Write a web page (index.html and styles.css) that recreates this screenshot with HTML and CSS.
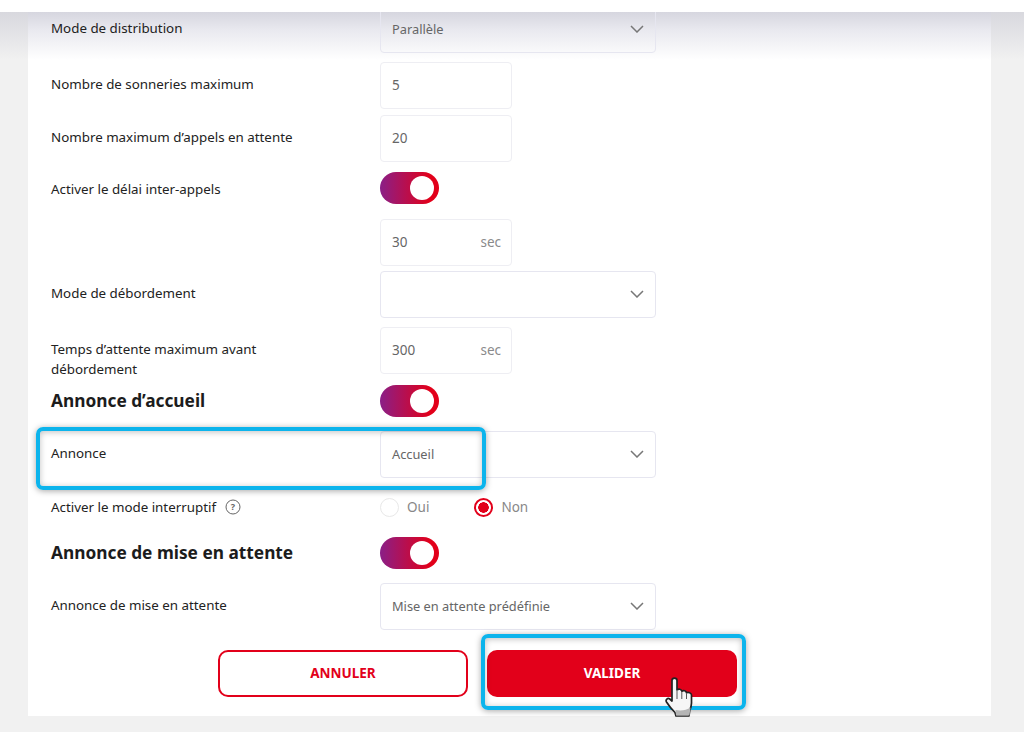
FILE: index.html
```html
<!DOCTYPE html>
<html lang="fr">
<head>
<meta charset="utf-8">
<title>Configuration</title>
<link rel="stylesheet" href="styles.css">
</head>
<body>
<main class="card">
  <div class="row r-first"><label class="label">Mode de distribution</label>
    <div class="field select disabled"><span>Parallèle</span><svg class="chev" viewBox="0 0 14 8"><path d="M1 1l6 6 6-6"/></svg></div></div>
  <div class="row r-9"><label class="label">Nombre de sonneries maximum</label>
    <div class="field short"><span>5</span></div></div>
  <div class="row r-6"><label class="label">Nombre maximum d’appels en attente</label>
    <div class="field short"><span>20</span></div></div>
  <div class="row r-10 center"><label class="label low">Activer le délai inter-appels</label>
    <div class="toggle"><i></i></div></div>
  <div class="row r-15"><span class="label"></span>
    <div class="field short"><span>30</span><em>sec</em></div></div>
  <div class="row r-5"><label class="label">Mode de débordement</label>
    <div class="field select"><span></span><svg class="chev" viewBox="0 0 14 8"><path d="M1 1l6 6 6-6"/></svg></div></div>
  <div class="row r-9"><label class="label two">Temps d’attente maximum avant débordement</label>
    <div class="field short"><span>300</span><em>sec</em></div></div>
  <div class="row r-11 center"><h2 class="heading">Annonce d’accueil</h2>
    <div class="toggle"><i></i></div></div>
  <div class="row r-14"><label class="label">Annonce</label>
    <div class="field select"><span>Accueil</span><svg class="chev" viewBox="0 0 14 8"><path d="M1 1l6 6 6-6"/></svg></div></div>
  <div class="row r-19 center"><label class="label">Activer le mode interruptif <svg class="help" viewBox="0 0 16 16"><circle cx="8" cy="8" r="7"/><text x="8" y="11.2">?</text></svg></label>
    <div class="radios">
      <span class="radio"><i class="dot"></i>Oui</span>
      <span class="radio"><i class="dot on"></i>Non</span>
    </div></div>
  <div class="row r-20 center"><h2 class="heading">Annonce de mise en attente</h2>
    <div class="toggle"><i></i></div></div>
  <div class="row r-14"><label class="label">Annonce de mise en attente</label>
    <div class="field select"><span>Mise en attente prédéfinie</span><svg class="chev" viewBox="0 0 14 8"><path d="M1 1l6 6 6-6"/></svg></div></div>
  <div class="actions">
    <button class="btn ghost">ANNULER</button>
    <button class="btn solid">VALIDER</button>
  </div>
</main>
<div class="topstrip"></div>
<div class="hl hl-a"></div>
<div class="hl hl-b"></div>
<svg class="hand" viewBox="0 0 30 42">
  <path d="M7 3.500c0-3.200 5-3.200 5 0V13c1.500-1.500 4.500-1 4.800 1.200 1.500-1 4.500-.6 4.700 1.600 1.800-.8 4.800 0 5 2.200v8c0 3-.8 5-1.800 7.500l-.7 5.500H11l-1-3.500C7.500 33 4 29 1.500 25c-1.300-2.300 1.200-4.500 3.300-3l2.200 2z" fill="#f6f6f6" stroke="#222" stroke-width="1.700" stroke-linejoin="round"/>
  <path d="M12 14v8M16.800 15v7M21.500 16.500V22" fill="none" stroke="#555" stroke-width="1"/>
  <path d="M11 38.500h13.500l1-8c-4 3-10 3.500-15 2.500z" fill="#b5b5b5"/>
</svg>
</body>
</html>
```
FILE: styles.css
```css
* { box-sizing: border-box; }
html, body { margin: 0; height: 732px; overflow: hidden; }
body { background: linear-gradient(#d8d8de 12px, #f1f1f1 60px); font-family: "Noto Sans", "Open Sans", sans-serif; color: #222; position: relative; }
.card { width: 963px; height: 716px; margin-left: 28px; padding: 6px 0 0 23px; background: linear-gradient(#d6d6df 12px, #e9e9ef 30px, #fff 60px); overflow: hidden; }
.row { display: grid; grid-template-columns: 329px 1fr; align-items: start; }
.row.center { align-items: center; }
.r-first { margin-top: 0; }
.r-5 { margin-top: 5px; }
.r-6 { margin-top: 6px; }
.r-9 { margin-top: 9px; }
.r-10 { margin-top: 10px; }
.r-11 { margin-top: 11px; }
.r-14 { margin-top: 14px; }
.r-15 { margin-top: 15px; }
.r-19 { margin-top: 19px; }
.r-20 { margin-top: 20px; }
.label { font-size: 13.350px; line-height: 20px; padding-top: 12px; color: #222; display: block; }
.row.center .label { padding-top: 0; }
.row.center .label.low { padding-top: 2px; }
.label.two { width: 240px; padding-top: 12px; margin-bottom: -5px; }
.heading { margin: 0; font-size: 17.300px; line-height: 24px; font-weight: 700; color: #1c1c1c; }
.field { height: 47px; border: 1.500px solid #eeeef3; border-radius: 4px; display: flex; align-items: center; justify-content: space-between; padding: 0 10px 2px 11px; font-size: 13.500px; color: #666; background: #fff; }
.field.short { width: 132px; }
.field.select { width: 276px; border-color: #e6e6f0; padding: 0 11px 1px 11px; font-size: 12.800px; }
.field.disabled { background: transparent; }
.field em { font-style: normal; color: #8a8a8a; }
.chev { width: 14px; height: 8px; fill: none; stroke: #777; stroke-width: 1.500; }
.toggle { width: 59px; height: 32px; border-radius: 16px; background: linear-gradient(90deg, #8a1f87, #e2001a 85%); padding: 4px 5px; display: flex; justify-content: flex-end; }
.toggle i { width: 24px; height: 24px; border-radius: 50%; background: #fff; }
.help { width: 16px; height: 16px; vertical-align: -3px; margin-left: 5px; fill: none; stroke: #666; stroke-width: 1; }
.help text { font: 700 9px "Noto Sans", sans-serif; fill: #666; stroke: none; text-anchor: middle; }
.radios { display: flex; gap: 45px; font-size: 13.500px; color: #888; }
.radio { display: flex; align-items: center; gap: 8px; height: 20px; }
.dot { width: 19px; height: 19px; border-radius: 50%; border: 1.500px solid #e8e8e8; background: #fff; }
.dot.on { border: 2px solid #e2001a; background: radial-gradient(circle, #e2001a 0 5px, #fff 5.500px); }
.actions { display: flex; gap: 19px; margin: 20px 0 0 167px; }
.btn { width: 250px; height: 47px; border-radius: 10px; font: 700 13.500px "Noto Sans", sans-serif; padding: 0 0 2px; }
.ghost { background: #fff; color: #e2001a; border: 2px solid #e2001a; }
.solid { background: #e2001a; color: #fff; border: 0; }
.topstrip { position: absolute; left: 0; top: 0; width: 100%; height: 12px; background: #fff; }
.hl { position: absolute; border: 4px solid #0cb4ec; border-radius: 7px; box-shadow: 0 1px 6px rgba(0,0,0,.35), inset 0 1px 6px rgba(0,0,0,.25); }
.hl-a { left: 36px; top: 427px; width: 450px; height: 63px; }
.hl-b { left: 481px; top: 634px; width: 265px; height: 76px; }
.hand { position: absolute; left: 665px; top: 677px; width: 30px; height: 42px; }
```
